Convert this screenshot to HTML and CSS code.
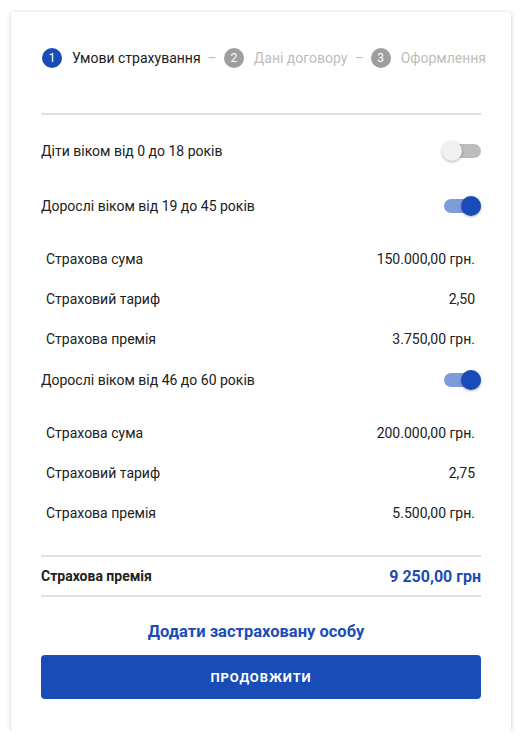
FILE: index.html
```html
<!DOCTYPE html>
<html lang="uk">
<head>
<meta charset="utf-8">
<link rel="stylesheet" href="styles.css">
</head>
<body>
<div class="card">
  <div class="stepper">
    <span class="circle active">1</span><span class="step-label active">Умови страхування</span>
    <span class="dash">–</span>
    <span class="circle">2</span><span class="step-label">Дані договору</span>
    <span class="dash">–</span>
    <span class="circle">3</span><span class="step-label">Оформлення</span>
  </div>
  <div class="divider top"></div>

  <div class="group-row first">
    <span>Діти віком від 0 до 18 років</span>
    <span class="toggle"><span class="track"></span><span class="knob"></span></span>
  </div>

  <div class="group-row second">
    <span>Дорослі віком від 19 до 45 років</span>
    <span class="toggle on"><span class="track"></span><span class="knob"></span></span>
  </div>
  <div class="subs">
    <div class="sub"><span>Страхова сума</span><span>150.000,00 грн.</span></div>
    <div class="sub"><span>Страховий тариф</span><span>2,50</span></div>
    <div class="sub"><span>Страхова премія</span><span>3.750,00 грн.</span></div>
  </div>

  <div class="group-row third">
    <span>Дорослі віком від 46 до 60 років</span>
    <span class="toggle on"><span class="track"></span><span class="knob"></span></span>
  </div>
  <div class="subs">
    <div class="sub"><span>Страхова сума</span><span>200.000,00 грн.</span></div>
    <div class="sub"><span>Страховий тариф</span><span>2,75</span></div>
    <div class="sub"><span>Страхова премія</span><span>5.500,00 грн.</span></div>
  </div>

  <div class="total">
    <span class="total-label">Страхова премія</span>
    <span class="total-value">9 250,00 грн</span>
  </div>

  <div class="add-link">Додати застраховану особу</div>
  <button class="btn">ПРОДОВЖИТИ</button>
</div>
</body>
</html>
```

FILE: styles.css
```css
* { box-sizing: border-box; }
body {
  margin: 0;
  background: #ffffff;
  font-family: Roboto, "Noto Sans", sans-serif;
  font-size: 14px;
  color: #212121;
}
.card {
  margin: 12px 0 0 11px;
  width: 500px;
  height: 719px;
  background: #fff;
  border-radius: 3px;
  box-shadow: 0 1px 5px rgba(0,0,0,0.18), 0 0 2px rgba(0,0,0,0.08);
  padding: 30px 30px 32px 30px;
  display: flex;
  flex-direction: column;
}
.stepper {
  display: flex;
  align-items: center;
  height: 32px;
  white-space: nowrap;
  margin-left: 1px;
}
.circle {
  width: 20px;
  height: 20px;
  border-radius: 50%;
  background: #9e9e9e;
  color: #fff;
  font-size: 12px;
  display: inline-flex;
  align-items: center;
  justify-content: center;
  flex: none;
}
.circle.active { background: #1a4cb8; }
.step-label {
  margin-left: 10px;
  color: #bdbdbd;
  font-size: 14px;
}
.step-label.active { color: #212121; }
.dash {
  color: #bdbdbd;
  margin: 0 7px;
}
.divider.top {
  height: 2px;
  background: #e0e0e0;
  margin-top: 39px;
}
.group-row {
  display: flex;
  align-items: center;
  justify-content: space-between;
  height: 40px;
}
.group-row.first { margin-top: 16px; }
.group-row.second { margin-top: 15px; margin-bottom: 13px; }
.group-row.third { margin-top: 2px; margin-bottom: 13px; }
.subs { padding: 0 6px 0 5px; }
.sub {
  display: flex;
  justify-content: space-between;
  align-items: center;
  height: 40px;
}
.toggle {
  position: relative;
  width: 40px;
  height: 20px;
  flex: none;
}
.toggle .track {
  position: absolute;
  left: 3px;
  right: 0;
  top: 3px;
  height: 14px;
  border-radius: 7px;
  background: #bdbdbd;
}
.toggle .knob {
  position: absolute;
  left: 1px;
  top: 0;
  width: 20px;
  height: 20px;
  border-radius: 50%;
  background: #f1f1f1;
  box-shadow: 0 1px 3px rgba(0,0,0,0.3);
}
.toggle.on .track { background: #7e9cdc; }
.toggle.on .knob { left: 20px; background: #1a4cb8; }
.total {
  margin-top: 22px;
  border-top: 2px solid #e0e0e0;
  border-bottom: 2px solid #e0e0e0;
  height: 42px;
  display: flex;
  align-items: center;
  justify-content: space-between;
}
.total-label { font-weight: 700; font-size: 14px; }
.total-value { font-weight: 700; font-size: 16px; color: #1a4cb8; }
.add-link {
  margin-top: 24px;
  padding-right: 10px;
  text-align: center;
  color: #1a4cb8;
  font-size: 16.5px;
  font-weight: 700;
  line-height: 22px;
}
.btn {
  margin-top: 12px;
  height: 44px;
  width: 100%;
  border: none;
  border-radius: 4px;
  background: #1a4cb8;
  color: #fff;
  font-family: Roboto, sans-serif;
  font-weight: 700;
  font-size: 13px;
  letter-spacing: 0.9px;
}
```
